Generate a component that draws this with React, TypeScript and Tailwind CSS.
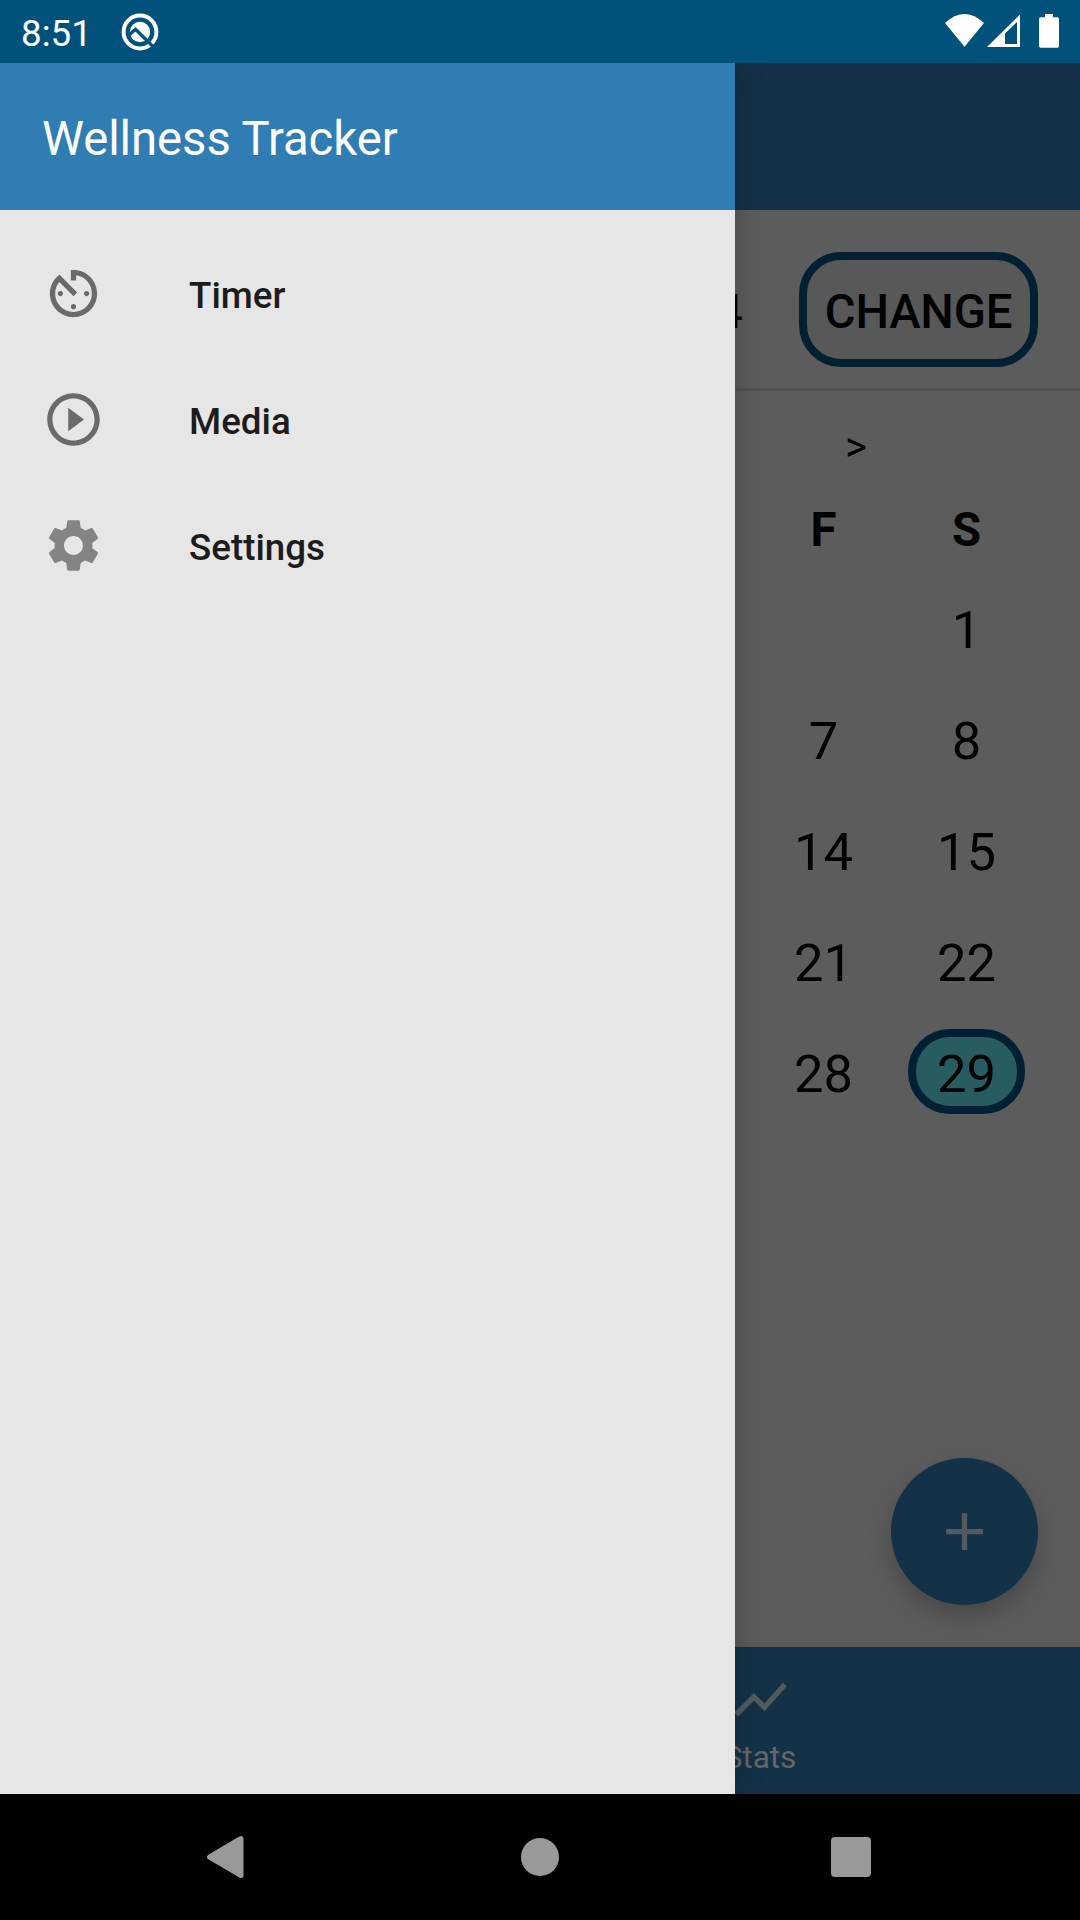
import React from "react";

const AV_TIMER =
  "M11 17c0 .55.45 1 1 1s1-.45 1-1-.45-1-1-1-1 .45-1 1zm0-14v4h2V5.08c3.39.49 6 3.39 6 6.92 0 3.87-3.13 7-7 7s-7-3.13-7-7c0-1.68.59-3.22 1.58-4.42L12 13l1.41-1.41-6.8-6.8v.02C4.42 6.45 3 9.05 3 12c0 4.97 4.02 9 9 9 4.97 0 9-4.03 9-9s-4.03-9-9-9h-1zm7 9c0-.55-.45-1-1-1s-1 .45-1 1 .45 1 1 1 1-.45 1-1zM6 12c0 .55.45 1 1 1s1-.45 1-1-.45-1-1-1-1 .45-1 1z";
const PLAY_CIRCLE =
  "M10 16.5l6-4.5-6-4.5v9zM12 2C6.48 2 2 6.48 2 12s4.48 10 10 10 10-4.48 10-10S17.52 2 12 2zm0 18c-4.41 0-8-3.59-8-8s3.59-8 8-8 8 3.59 8 8-3.59 8-8 8z";
const GEAR =
  "M19.14 12.94c.04-.3.06-.61.06-.94 0-.32-.02-.64-.07-.94l2.03-1.58c.18-.14.23-.41.12-.61l-1.92-3.32c-.12-.22-.37-.29-.59-.22l-2.39.96c-.5-.38-1.03-.7-1.62-.94l-.36-2.54c-.04-.24-.24-.41-.48-.41h-3.84c-.24 0-.43.17-.47.41l-.36 2.54c-.59.24-1.13.57-1.62.94l-2.39-.96c-.22-.08-.47 0-.59.22L2.74 8.87c-.12.21-.08.47.12.61l2.03 1.58c-.05.3-.09.63-.09.94s.02.64.07.94l-2.03 1.58c-.18.14-.23.41-.12.61l1.92 3.32c.12.22.37.29.59.22l2.39-.96c.5.38 1.03.7 1.62.94l.36 2.54c.05.24.24.41.48.41h3.84c.24 0 .44-.17.47-.41l.36-2.54c.59-.24 1.13-.56 1.62-.94l2.39.96c.22.08.47 0 .59-.22l1.92-3.32c.12-.22.07-.47-.12-.61l-2.01-1.58zM12 15.6c-1.98 0-3.6-1.62-3.6-3.6s1.62-3.6 3.6-3.6 3.6 1.62 3.6 3.6-1.62 3.6-3.6 3.6z";

const menu = [
  { label: "Timer", path: AV_TIMER, tone: "text-[#6a6a6a]" },
  { label: "Media", path: PLAY_CIRCLE, tone: "text-[#6a6a6a]" },
  { label: "Settings", path: GEAR, tone: "text-[#848484]" },
];

const weeks = [
  ["", "1"],
  ["7", "8"],
  ["14", "15"],
  ["21", "22"],
  ["28", "29"],
];

function Icon({ path, className }: { path: string; className: string }) {
  return (
    <svg viewBox="0 0 24 24" fill="currentColor" className={className}>
      <path d={path} />
    </svg>
  );
}

function StatusBar() {
  return (
    <header className="relative z-20 flex h-[63px] shrink-0 items-start bg-[#00527d] pl-[21px] text-white">
      <span className="mt-[12px] w-[100px] text-[36.75px] leading-[43px]">8:51</span>
      <svg viewBox="0 0 38 38" className="mt-[12.5px] size-[38px]">
        <circle cx="19" cy="19" r="16.4" fill="none" stroke="#fff" strokeWidth="4" />
        <circle cx="19" cy="19" r="10.2" fill="#fff" />
        <path d="M7.500 22.500l7-6.200L32.500 34" fill="none" stroke="#00527d" strokeWidth="3.2" />
      </svg>
      <svg viewBox="0 0 120 40" className="ml-auto mr-[15px] mt-[10px] h-[40px] w-[120px]" fill="#fff">
        <path d="M0 13Q19.5-5 39 13L19.5 36.7z" />
        <path fillRule="evenodd" d="M42 37L75 4.5V37zM60 34h12V12L60 23.5z" />
        <path d="M100 4h8v3.2h4.200q1.800 0 1.800 1.800v27q0 1.800-1.800 1.800H95.800Q94 37.800 94 36V9q0-1.800 1.800-1.800H100z" />
      </svg>
    </header>
  );
}

function Drawer() {
  return (
    <aside className="relative z-10 flex w-[735px] shrink-0 flex-col bg-[#e6e6e6] shadow-[0_0_28px_rgba(0,0,0,0.22)]">
      <div className="h-[147px] bg-[#2f7db2] pl-[42px] pt-[48px] text-[47.25px] leading-[56px] tracking-[-0.05px] text-white">
        Wellness Tracker
      </div>
      <nav className="pt-[21px]">
        {menu.map((item) => (
          <div key={item.label} className="flex h-[126px] items-start pl-[42px]">
            <Icon path={item.path} className={`mt-[31px] size-[63px] ${item.tone}`} />
            <span className="ml-[84px] mt-[43px] text-[36.75px] font-medium leading-[43px] text-[#1c1c1c]">
              {item.label}
            </span>
          </div>
        ))}
      </nav>
    </aside>
  );
}

function CalendarPage() {
  return (
    <main className="flex w-[345px] shrink-0 flex-col overflow-hidden bg-[#5c5c5c] text-[#020202]">
      <div className="h-[147px] shrink-0 bg-[#133247]" />
      <div className="flex h-[181px] shrink-0 items-start justify-end border-b-[3px] border-[#525252] pr-[42px] pt-[42px]">
        <span className="mr-[56px] mt-[32px] shrink-0 text-[47.25px] leading-[56px]">4</span>
        <button className="h-[115px] w-[239px] shrink-0 rounded-[42px] border-8 border-[#002133] bg-[#585858] pt-[5px] text-[47.25px] font-medium leading-[56px] tracking-[-0.2px]">
          CHANGE
        </button>
      </div>
      <div className="h-[98px] shrink-0 pl-[107px] pt-[31px] text-[42px] leading-[50px]">
        <span className="block w-7 text-center">&gt;</span>
      </div>
      <div className="ml-[17px] grid w-[286px] grid-cols-2 text-center">
        <span className="h-[96px] pt-[13px] text-[47.25px] font-bold leading-[56px]">F</span>
        <span className="h-[96px] pt-[13px] text-[47.25px] font-bold leading-[56px]">S</span>
        {weeks.flat().map((day, i) => (
          <div key={i} className="flex h-[111px] items-start justify-center">
            <span
              className={
                day === "29"
                  ? "h-[85px] w-[117px] rounded-[42px] border-8 border-[#002133] bg-[#275c61] pt-[6px] text-[52.5px] leading-[62px]"
                  : "h-[85px] w-[117px] pt-[14px] text-[52.5px] leading-[62px]"
              }
            >
              {day}
            </span>
          </div>
        ))}
      </div>
      <button className="ml-auto mr-[42px] mt-auto flex size-[147px] shrink-0 items-center justify-center rounded-full bg-[#133247] text-[#525b5f] shadow-[0_12px_24px_rgba(0,0,0,0.22)]">
        <Icon path="M19 13h-6v6h-2v-6H5v-2h6V5h2v6h6v2z" className="size-[63px]" />
      </button>
      <div className="mt-[42px] h-[147px] shrink-0 bg-[#133247] shadow-[0_0_6px_rgba(0,0,0,0.08)]">
        <div className="-ml-[25px] flex w-[100px] flex-col items-center pt-[21px]">
          <Icon
            path="M3.500 18.490l6-6.010 4 4L22 6.920l-1.410-1.410-7.090 7.970-4-4L2 16.990z"
            className="size-[63px] text-[#525b5f]"
          />
          <span className="mt-[8px] text-[31.5px] leading-[37px] text-[#666666]">Stats</span>
        </div>
      </div>
    </main>
  );
}

function SystemNav() {
  return (
    <footer className="relative z-20 flex h-[126px] shrink-0 items-center bg-black pl-[205px]">
      <svg viewBox="0 0 40 44" className="h-[44px] w-[40px]">
        <path d="M4.500 22L36 3.500V40.500z" fill="#999" stroke="#999" strokeWidth="5" strokeLinejoin="round" />
      </svg>
      <span className="ml-[276px] size-[38px] rounded-full bg-[#999]" />
      <span className="ml-[272px] size-[40px] rounded-[4px] bg-[#999]" />
    </footer>
  );
}

export default function App() {
  return (
    <div className="flex h-[1920px] w-[1080px] flex-col overflow-hidden bg-black font-['Roboto',sans-serif]">
      <StatusBar />
      <div className="flex min-h-0 flex-1 overflow-hidden">
        <Drawer />
        <CalendarPage />
      </div>
      <SystemNav />
    </div>
  );
}
